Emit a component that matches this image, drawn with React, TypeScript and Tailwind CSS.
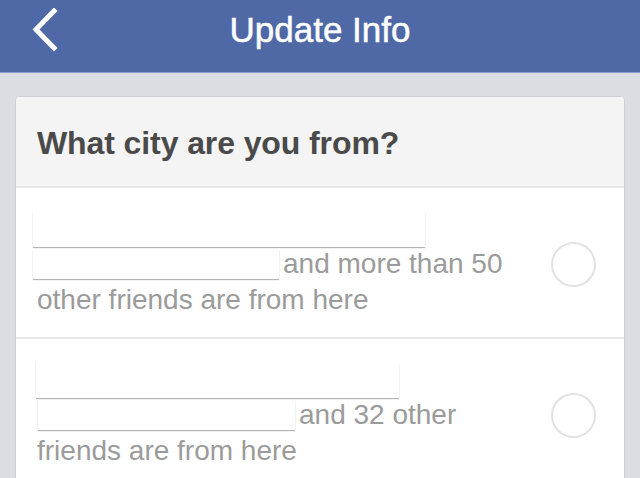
import React from 'react';

const ROWS = [
  { nameW: 392, friendW: 246, nameX: 17, friendX: 17, text: 'and more than 50', rest: 'other friends are from here' },
  { nameW: 363, friendW: 257, nameX: 20, friendX: 22, text: 'and 32 other', rest: 'friends are from here' },
];

function Redacted({ w, h, ml }: { w: number; h: number; ml: number }) {
  return (
    <span
      className="inline-block bg-white align-middle shadow-[0_1px_1px_rgba(0,0,0,0.3)]"
      style={{ width: w, height: h, marginLeft: ml }}
    />
  );
}

export default function App() {
  return (
    <div className="h-[478px] w-[640px] overflow-hidden bg-[#dcdde2] font-['Liberation_Sans',Arial,sans-serif]">
      <div className="relative flex h-[73px] items-center justify-center border-b border-[#8a9dc6] bg-[#4e69a6]">
        <svg className="absolute left-[30px] top-[8px]" width="28" height="44" viewBox="0 0 28 44">
          <path d="M24 3 L6 21.5 L24 40" fill="none" stroke="white" strokeWidth="5" strokeLinecap="square" />
        </svg>
        <h1 className="pb-[12px] text-[35px] text-white [-webkit-text-stroke:0.5px_white]">Update Info</h1>
      </div>

      <div className="mx-[15px] mt-[23px] overflow-hidden rounded-[4px] border border-[#cfd0d4] bg-white">
        <div className="flex h-[91px] items-center border-b-2 border-[#e7e7e7] bg-[#f4f4f4] px-[21px] pt-[3px]">
          <h2 className="text-[32px] font-bold tracking-[-0.1px] text-[#4a4a4a]">What city are you from?</h2>
        </div>

        {ROWS.map((r, i) => (
          <div
            key={i}
            className="flex items-center border-b-2 border-[#e9e9e9] pb-[19px] pt-[22px] pr-[28px]"
          >
            <div className="flex-1 text-[28px] leading-[36px] text-[#9b9b9b]">
              <div className="h-[36px]">
                <Redacted w={r.nameW} h={35} ml={r.nameX} />
              </div>
              <div className="flex h-[36px] items-center">
                <Redacted w={r.friendW} h={29} ml={r.friendX} />
                <span className="ml-[4px]">{r.text}</span>
              </div>
              <div className="h-[36px] pl-[21px]">{r.rest}</div>
            </div>
            <div className="h-[45px] w-[45px] rounded-full border-2 border-[#e2e2e2]" />
          </div>
        ))}
      </div>
    </div>
  );
}
